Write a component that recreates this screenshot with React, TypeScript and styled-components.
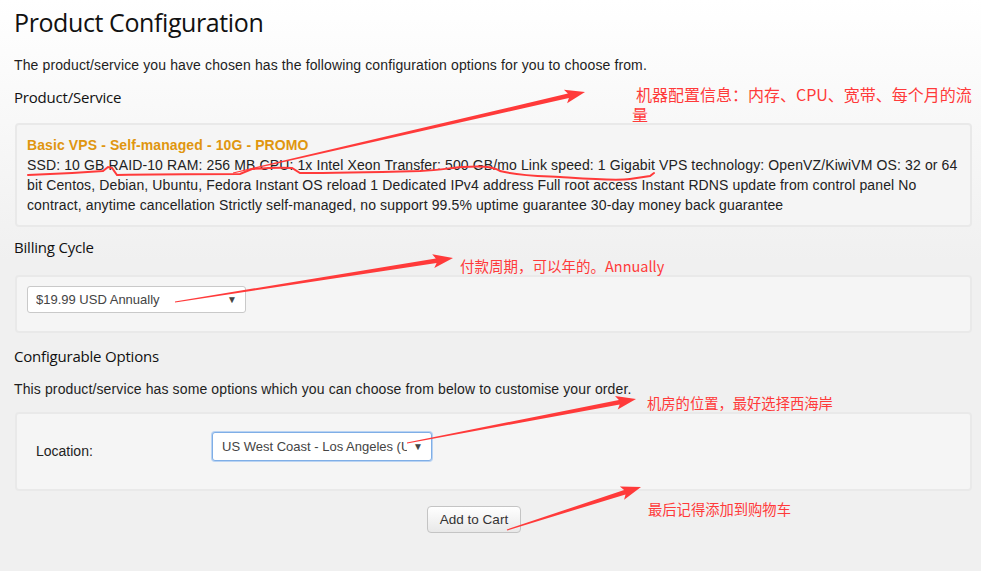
import React from 'react'
import styled, { createGlobalStyle } from 'styled-components'

const GlobalStyle = createGlobalStyle`
  html, body {
    margin: 0;
    padding: 0;
  }
  body {
    background: linear-gradient(#ffffff 0, #f0f0f0 260px, #f0f0f0 100%);
    min-height: 571px;
    font-family: "Liberation Sans", Arial, sans-serif;
    color: #222;
  }
`

const Page = styled.div`
  position: relative;
  width: 981px;
  height: 571px;
  box-sizing: border-box;
  padding: 0 9px 0 14px;
  overflow: hidden;
`

const Title = styled.h1`
  margin: 2px 0 0;
  font-family: "Open Sans", sans-serif;
  font-weight: 400;
  font-size: 25px;
  line-height: 40px;
  color: #111;
  letter-spacing: -0.4px;
`

const Intro = styled.p<{ top: number }>`
  margin: ${(p) => p.top}px 0 0;
  font-size: 14px;
  line-height: 20px;
  letter-spacing: 0.12px;
  color: #1e1e1e;
`

const Heading = styled.h3<{ top: number }>`
  margin: ${(p) => p.top}px 0 0;
  font-family: "Open Sans", sans-serif;
  font-weight: 400;
  font-size: 15px;
  line-height: 20px;
  color: #111;
  letter-spacing: -0.2px;
`

const Well = styled.div<{ top: number; pad: string }>`
  margin: ${(p) => p.top}px 0 0 1px;
  padding: ${(p) => p.pad};
  background: #f5f5f5;
  border: 2px solid #e9e9e9;
  border-radius: 4px;
`

const ProductName = styled.div`
  font-size: 14px;
  line-height: 20px;
  font-weight: 700;
  letter-spacing: 0.1px;
  color: #e0960f;
`

const ProductDesc = styled.div`
  font-size: 14px;
  line-height: 20px;
  letter-spacing: 0.12px;
  color: #222;
`

const Select = styled.div<{ width: number; focused?: boolean }>`
  display: flex;
  align-items: center;
  box-sizing: border-box;
  width: ${(p) => p.width}px;
  height: ${(p) => (p.focused ? 29 : 27)}px;
  padding: 0 8px 0 ${(p) => (p.focused ? 9 : 8)}px;
  background: #fff;
  border: 1px solid ${(p) => (p.focused ? '#7faee6' : '#c9c9c9')};
  box-shadow: ${(p) => (p.focused ? '0 0 0 1px #b9d3f3' : 'none')};
  border-radius: 3px;
  font-size: 13px;
  color: #444;
`

const SelectValue = styled.span`
  flex: 1;
  overflow: hidden;
  white-space: nowrap;
`

const Caret = styled.span`
  font-size: 10px;
  color: #444;
  margin-left: 6px;
`

const OptionRow = styled.div`
  display: flex;
  align-items: flex-start;
`

const OptionLabel = styled.div`
  width: 176px;
  padding: 11px 0 0 9px;
  font-size: 14px;
  line-height: 16px;
  color: #222;
`

const ButtonRow = styled.div`
  display: flex;
  padding: 15px 0 0 413px;
`

const Button = styled.button`
  height: 27px;
  width: 94px;
  padding: 0;
  font-family: "Liberation Sans", Arial, sans-serif;
  font-size: 13.5px;
  color: #333;
  background: linear-gradient(#ffffff, #e8e8e8);
  border: 1px solid #c4c4c4;
  border-radius: 4px;
`

const Note = styled.span<{ x: number; y: number; size: number }>`
  position: absolute;
  left: ${(p) => p.x}px;
  top: ${(p) => p.y}px;
  font-family: "Noto Sans CJK SC", "Noto Sans", sans-serif;
  font-size: ${(p) => p.size}px;
  line-height: 20px;
  color: #ff3a3a;
  white-space: nowrap;
`

const Overlay = styled.svg`
  position: absolute;
  left: 0;
  top: 0;
  pointer-events: none;
`

type Pt = [number, number]

const arrowPoints = (from: Pt, to: Pt) => {
  const [x1, y1] = from
  const [x2, y2] = to
  const len = Math.hypot(x2 - x1, y2 - y1)
  const ux = (x2 - x1) / len
  const uy = (y2 - y1) / len
  const nx = -uy
  const ny = ux
  const head = 17
  const bx = x2 - ux * head
  const by = y2 - uy * head
  const tail = 0.5
  const neck = 2.3
  const wing = 7
  const pts: Pt[] = [
    [x1 + nx * tail, y1 + ny * tail],
    [bx + nx * neck, by + ny * neck],
    [bx + nx * wing - ux * 3, by + ny * wing - uy * 3],
    [x2, y2],
    [bx - nx * wing - ux * 3, by - ny * wing - uy * 3],
    [bx - nx * neck, by - ny * neck],
    [x1 - nx * tail, y1 - ny * tail],
  ]
  return pts.map((p) => p.map((v) => v.toFixed(1)).join(',')).join(' ')
}

const arrows: [Pt, Pt][] = [
  [[233, 173], [585, 92]],
  [[175, 302], [453, 258]],
  [[407, 443], [636, 399]],
  [[507, 530], [641, 487]],
]

const Annotations = () => (
  <>
    <Overlay width={981} height={571} viewBox="0 0 981 571">
      <path
        d="M28 175 C60 174 90 172 103 171 L108 167 L112 168 L117 175 C160 174 210 174 240 174 L252 169 C265 168 280 167 292 168 L300 173 C340 173 380 172 420 171 C440 170 450 168 462 167 C480 166 492 166 500 171 C520 176 540 176 560 177 C590 179 615 181 630 179 L650 176 L654 173"
        fill="none"
        stroke="#ff3a3a"
        strokeWidth={2}
        strokeLinecap="round"
      />
      {arrows.map(([a, b], i) => (
        <polygon key={i} points={arrowPoints(a, b)} fill="#ff3a3a" />
      ))}
    </Overlay>
    <Note x={636} y={84} size={16}>机器配置信息：内存、CPU、宽带、每个月的流</Note>
    <Note x={632} y={104} size={16}>量</Note>
    <Note x={460} y={256} size={14.5}>付款周期，可以年的。Annually</Note>
    <Note x={647} y={393} size={14.3}>机房的位置，最好选择西海岸</Note>
    <Note x={648} y={499} size={14.3}>最后记得添加到购物车</Note>
  </>
)

export default function App() {
  return (
    <Page>
      <GlobalStyle />
      <Title>Product Configuration</Title>
      <Intro top={13}>
        The product/service you have chosen has the following configuration options for you to choose from.
      </Intro>
      <Heading top={12}>Product/Service</Heading>
      <Well top={16} pad="10px 10px 10px 10px">
        <ProductName>Basic VPS - Self-managed - 10G - PROMO</ProductName>
        <ProductDesc>
          SSD: 10 GB RAID-10 RAM: 256 MB CPU: 1x Intel Xeon Transfer: 500 GB/mo Link speed: 1 Gigabit VPS
          technology: OpenVZ/KiwiVM OS: 32 or 64 bit Centos, Debian, Ubuntu, Fedora Instant OS reload 1
          Dedicated IPv4 address Full root access Instant RDNS update from control panel No contract, anytime
          cancellation Strictly self-managed, no support 99.5% uptime guarantee 30-day money back guarantee
        </ProductDesc>
      </Well>
      <Heading top={10}>Billing Cycle</Heading>
      <Well top={18} pad="9px 10px 18px 10px">
        <Select width={219}>
          <SelectValue>$19.99 USD Annually</SelectValue>
          <Caret>▼</Caret>
        </Select>
      </Well>
      <Heading top={13}>Configurable Options</Heading>
      <Intro top={13}>
        This product/service has some options which you can choose from below to customise your order.
      </Intro>
      <Well top={13} pad="18px 10px 28px 10px">
        <OptionRow>
          <OptionLabel>Location:</OptionLabel>
          <Select width={220} focused>
            <SelectValue>US West Coast - Los Angeles (US)</SelectValue>
            <Caret>▼</Caret>
          </Select>
        </OptionRow>
      </Well>
      <ButtonRow>
        <Button>Add to Cart</Button>
      </ButtonRow>
      <Annotations />
    </Page>
  )
}
